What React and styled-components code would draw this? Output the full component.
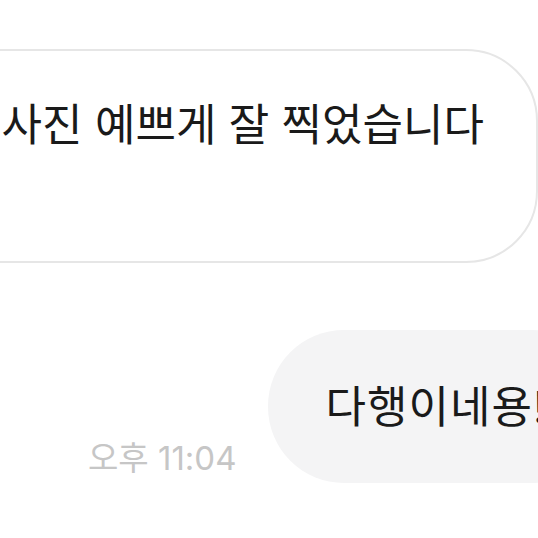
import React from 'react';
import styled, { createGlobalStyle } from 'styled-components';

const GlobalStyle = createGlobalStyle`
  html, body {
    margin: 0;
    padding: 0;
    background: #ffffff;
  }
  body {
    font-family: Inter, 'Noto Sans CJK KR', sans-serif;
  }
`;

// whole chat area, clipped at the window edge
const Chat = styled.div`
  width: 538px;
  height: 538px;
  overflow: hidden;
  display: flex;
  flex-direction: column;
  padding-top: 49px;
  box-sizing: border-box;
`;

const Row = styled.div`
  display: flex;
  align-items: flex-end;
  justify-content: ${(p) => (p.$mine ? 'flex-start' : 'flex-end')};
  padding-left: ${(p) => (p.$mine ? '88px' : '0')};
  margin-top: ${(p) => p.$top || 0}px;
  gap: 31px;
`;

// message bubble: white with outline when received, grey when sent
const Bubble = styled.div`
  flex-shrink: 0;
  box-sizing: border-box;
  width: ${(p) => p.$width}px;
  height: ${(p) => p.$height}px;
  border-radius: ${(p) => p.$radius}px;
  display: flex;
  color: #1a1a1a;
  font-size: 44px;
  line-height: 1;
  white-space: nowrap;
  ${(p) =>
    p.$mine
      ? `
    background: #f4f4f5;
    align-items: center;
    padding-left: 58px;
    letter-spacing: 1px;
  `
      : `
    background: #ffffff;
    border: 2px solid #e6e6e6;
    justify-content: flex-end;
    padding: 52px 52px 0 0;
  `}
`;

const Time = styled.span`
  flex-shrink: 0;
  color: #c6c6c6;
  font-size: 33px;
  line-height: 1;
  padding-bottom: 8px;
  white-space: nowrap;
`;

export default function App() {
  return (
    <>
      <GlobalStyle />
      <Chat>
        <Row>
          <Bubble $width={620} $height={214} $radius={72}>
            업사진 예쁘게 잘 찍었습니다
          </Bubble>
        </Row>
        <Row $mine $top={67}>
          <Time>오후 11:04</Time>
          <Bubble $mine $width={340} $height={153} $radius={76}>
            다행이네용!
          </Bubble>
        </Row>
      </Chat>
    </>
  );
}
